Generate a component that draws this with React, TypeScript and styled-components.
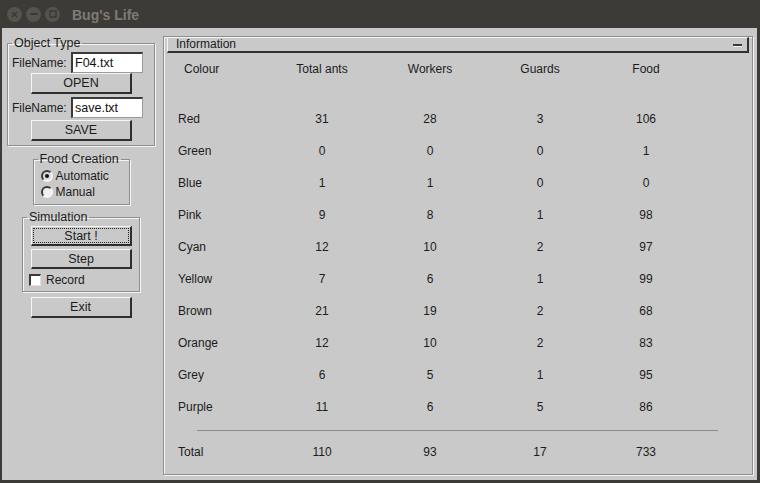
import React from "react";
import styled, { createGlobalStyle } from "styled-components";

const GlobalStyle = createGlobalStyle`
  html, body {
    margin: 0;
    padding: 0;
    overflow: hidden;
    background: #3c3b37;
  }
  body {
    font-family: "Liberation Sans", Arial, sans-serif;
    font-size: 12px;
    color: #1c1c1c;
  }
`;

const GRAY = "#c9c9c9";
const DARK = "#3c3b37";

const Window = styled.div`
  width: 760px;
  height: 483px;
  display: flex;
  flex-direction: column;
`;

const TitleBar = styled.div`
  height: 28px;
  flex-shrink: 0;
  background: ${DARK};
  display: flex;
  align-items: center;
  padding-left: 7px;
  box-sizing: border-box;
`;

const TitleButtons = styled.div`
  display: flex;
  gap: 4px;
  margin-right: 12px;
`;

const TitleButton = styled.div`
  width: 15px;
  height: 15px;
  border-radius: 50%;
  background: #55534e;
  display: flex;
  align-items: center;
  justify-content: center;
  color: #3a3935;
`;

const Title = styled.div`
  font-family: "Liberation Sans", Arial, sans-serif;
  font-weight: bold;
  font-size: 14px;
  color: #7e7b75;
  margin-top: 1px;
`;

const Body = styled.div`
  flex: 1;
  min-height: 0;
  display: flex;
  background: ${GRAY};
  border-left: 2px solid ${DARK};
  border-right: 3px solid ${DARK};
  border-bottom: 3px solid ${DARK};
`;

const LeftColumn = styled.div`
  width: 158px;
  display: flex;
  flex-direction: column;
  align-items: center;
  padding-top: 8px;
  box-sizing: border-box;
`;

const Frame = styled.fieldset<{ $width: number; $mt?: number; $pb?: number }>`
  width: ${(p) => p.$width}px;
  box-sizing: border-box;
  margin: ${(p) => p.$mt ?? 0}px 0 0 0;
  padding: 2px 3px ${(p) => p.$pb ?? 4}px 4px;
  border: 1px solid #8e8e8e;
  box-shadow: inset 1px 1px 0 #f4f4f4, 1px 1px 0 #f4f4f4;
  min-width: 0;
  display: flex;
  flex-direction: column;
`;

const Legend = styled.legend`
  padding: 0 2px;
  margin-left: 0;
  line-height: 14px;
  font-size: 12.5px;
`;

const FieldRow = styled.div<{ $mt?: number }>`
  display: flex;
  align-items: center;
  margin: ${(p) => p.$mt ?? 0}px 0 0 0;
`;

const FieldLabel = styled.span`
  width: 59px;
  font-size: 12px;
`;

const TextInput = styled.div`
  width: 72px;
  height: 21px;
  box-sizing: border-box;
  background: #ffffff;
  border-top: 2px solid #3a3a3a;
  border-left: 2px solid #3a3a3a;
  border-bottom: 1px solid #9a9a9a;
  border-right: 1px solid #9a9a9a;
  padding: 1px 2px;
  line-height: 16px;
  font-size: 12.5px;
  color: #111;
`;

const Button = styled.div<{ $h?: number; $mt?: number; $focus?: boolean }>`
  width: 101px;
  height: ${(p) => p.$h ?? 21}px;
  margin-top: ${(p) => p.$mt ?? 0}px;
  align-self: center;
  box-sizing: border-box;
  background: ${GRAY};
  border-top: 1px solid #f6f6f6;
  border-left: 1px solid #f6f6f6;
  border-bottom: 2px solid #2e2e2e;
  border-right: 2px solid #2e2e2e;
  display: flex;
  align-items: center;
  justify-content: center;
  font-size: 12.5px;
  position: relative;
  ${(p) =>
    p.$focus &&
    `
    &::after {
      content: "";
      position: absolute;
      inset: 1px;
      border: 1px dotted #222;
    }
  `}
`;

const RadioRow = styled.div`
  display: flex;
  align-items: center;
  height: 16px;
  margin-left: 3px;
  gap: 3px;
  font-size: 12px;
`;

const Radio = styled.span<{ $on?: boolean }>`
  width: 12px;
  height: 12px;
  box-sizing: border-box;
  border-radius: 50%;
  border: 2px solid;
  border-color: #3a3a3a #f4f4f4 #f4f4f4 #3a3a3a;
  background: ${(p) => (p.$on ? "#d8d8d8" : "#f0f0f0")};
  display: flex;
  align-items: center;
  justify-content: center;
  &::after {
    content: "";
    width: 4px;
    height: 4px;
    border-radius: 50%;
    background: ${(p) => (p.$on ? "#111" : "transparent")};
  }
`;

const CheckRow = styled.div`
  display: flex;
  align-items: center;
  gap: 5px;
  margin: 4px 0 0 2px;
  font-size: 12px;
`;

const CheckBox = styled.span`
  width: 12px;
  height: 12px;
  box-sizing: border-box;
  background: #ffffff;
  border-top: 2px solid #3a3a3a;
  border-left: 2px solid #3a3a3a;
  border-bottom: 1px solid #e0e0e0;
  border-right: 1px solid #e0e0e0;
`;

const InfoFrame = styled.div`
  flex: 1;
  margin: 8px 4px 5px 3px;
  border: 1px solid #8e8e8e;
  box-shadow: inset 1px 1px 0 #f4f4f4, 1px 1px 0 #f4f4f4;
  display: flex;
  flex-direction: column;
`;

const InfoHeader = styled.div`
  height: 16px;
  flex-shrink: 0;
  margin: 0 3px 0 3px;
  box-sizing: border-box;
  border-top: 1px solid #f4f4f4;
  border-left: 1px solid #f4f4f4;
  border-bottom: 2px solid #303030;
  border-right: 2px solid #303030;
  display: flex;
  align-items: center;
  justify-content: space-between;
  padding: 0 5px 0 8px;
  line-height: 13px;
`;

const Minimize = styled.span`
  width: 9px;
  height: 2px;
  background: #3a3a3a;
  box-shadow: 0 1px 0 #f4f4f4;
  margin-top: 1px;
`;

const Table = styled.div<{ $mt?: number }>`
  display: grid;
  grid-template-columns: 92px 104px 112px 108px 104px;
  grid-auto-rows: 32px;
  padding-left: 14px;
  margin-top: ${(p) => p.$mt ?? 0}px;
  align-items: center;
`;

const Cell = styled.div<{ $first?: boolean; $head?: boolean }>`
  text-align: ${(p) => (p.$first ? "left" : "center")};
  padding-left: ${(p) => (p.$first && p.$head ? 6 : 0)}px;
  font-size: 12px;
`;

const Rule = styled.div`
  height: 1px;
  flex-shrink: 0;
  background: #8a8a8a;
  margin: 7px 0 0 33px;
  width: 521px;
`;

const rows: [string, number, number, number, number][] = [
  ["Red", 31, 28, 3, 106],
  ["Green", 0, 0, 0, 1],
  ["Blue", 1, 1, 0, 0],
  ["Pink", 9, 8, 1, 98],
  ["Cyan", 12, 10, 2, 97],
  ["Yellow", 7, 6, 1, 99],
  ["Brown", 21, 19, 2, 68],
  ["Orange", 12, 10, 2, 83],
  ["Grey", 6, 5, 1, 95],
  ["Purple", 11, 6, 5, 86],
];

const heads = ["Colour", "Total ants", "Workers", "Guards", "Food"];

export default function App() {
  return (
    <Window>
      <GlobalStyle />
      <TitleBar>
        <TitleButtons>
          <TitleButton>
            <svg width="7" height="7" viewBox="0 0 7 7">
              <path d="M1 1L6 6M6 1L1 6" stroke="currentColor" strokeWidth="1.6" />
            </svg>
          </TitleButton>
          <TitleButton>
            <svg width="8" height="8" viewBox="0 0 8 8">
              <path d="M0.5 4H7.5" stroke="currentColor" strokeWidth="2" />
            </svg>
          </TitleButton>
          <TitleButton>
            <svg width="8" height="8" viewBox="0 0 8 8">
              <rect x="1" y="1" width="6" height="6" fill="none" stroke="currentColor" strokeWidth="1.4" />
            </svg>
          </TitleButton>
        </TitleButtons>
        <Title>Bug's Life</Title>
      </TitleBar>
      <Body>
        <LeftColumn>
          <Frame $width={148}>
            <Legend>Object Type</Legend>
            <FieldRow>
              <FieldLabel>FileName:</FieldLabel>
              <TextInput>F04.txt</TextInput>
            </FieldRow>
            <Button>OPEN</Button>
            <FieldRow $mt={3}>
              <FieldLabel>FileName:</FieldLabel>
              <TextInput>save.txt</TextInput>
            </FieldRow>
            <Button $mt={2}>SAVE</Button>
          </Frame>
          <Frame $width={97} $mt={6} $pb={4}>
            <Legend>Food Creation</Legend>
            <RadioRow>
              <Radio $on />
              Automatic
            </RadioRow>
            <RadioRow>
              <Radio />
              Manual
            </RadioRow>
          </Frame>
          <Frame $width={118} $mt={5} $pb={4}>
            <Legend>Simulation</Legend>
            <Button $h={20} $mt={0} $focus>
              Start !
            </Button>
            <Button $h={20} $mt={3}>
              Step
            </Button>
            <CheckRow>
              <CheckBox />
              Record
            </CheckRow>
          </Frame>
          <Button $h={21} $mt={5}>
            Exit
          </Button>
        </LeftColumn>
        <InfoFrame>
          <InfoHeader>
            <span>Information</span>
            <Minimize />
          </InfoHeader>
          <Table>
            {heads.map((h, i) => (
              <Cell key={h} $first={i === 0} $head>
                {h}
              </Cell>
            ))}
          </Table>
          <Table $mt={18}>
            {rows.map((r) =>
              r.map((v, i) => (
                <Cell key={r[0] + i} $first={i === 0}>
                  {v}
                </Cell>
              ))
            )}
          </Table>
          <Rule />
          <Table $mt={5}>
            {["Total", 110, 93, 17, 733].map((v, i) => (
              <Cell key={i} $first={i === 0}>
                {v}
              </Cell>
            ))}
          </Table>
        </InfoFrame>
      </Body>
    </Window>
  );
}
